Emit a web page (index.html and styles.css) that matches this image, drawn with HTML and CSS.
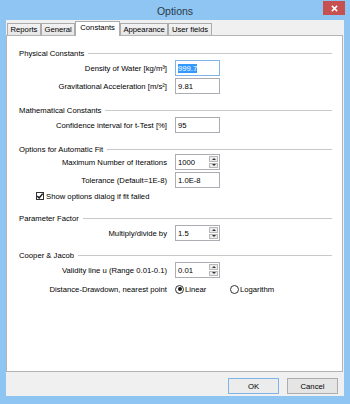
FILE: index.html
```html
<!DOCTYPE html>
<html>
<head>
<meta charset="utf-8">
<title>Options</title>
<link rel="stylesheet" href="styles.css">
</head>
<body>
<div class="window">
  <div class="titlebar">
    <span class="title">Options</span>
    <div class="close">
      <svg width="7" height="7" viewBox="0 0 8 8"><path d="M1 1L7 7M7 1L1 7" stroke="#fff" stroke-width="1.7"/></svg>
    </div>
  </div>
  <div class="client">
    <div class="tabs">
      <div class="tab">Reports</div>
      <div class="tab">General</div>
      <div class="tab active">Constants</div>
      <div class="tab">Appearance</div>
      <div class="tab">User fields</div>
    </div>
    <div class="panel">
      <section class="group">
        <div class="group-head"><span>Physical Constants</span></div>
        <div class="row"><span class="label">Density of Water [kg/m³]</span><div class="field focus"><span class="sel">999.7</span></div></div>
        <div class="row"><span class="label">Gravitational Acceleration [m/s²]</span><div class="field">9.81</div></div>
      </section>
      <section class="group">
        <div class="group-head"><span>Mathematical Constants</span></div>
        <div class="row"><span class="label">Confidence interval for t-Test [%]</span><div class="field">95</div></div>
      </section>
      <section class="group">
        <div class="group-head tight"><span>Options for Automatic Fit</span></div>
        <div class="row"><span class="label">Maximum Number of Iterations</span><div class="field">1000<span class="spin"><span class="up"></span><span class="down"></span></span></div></div>
        <div class="row"><span class="label">Tolerance (Default=1E-8)</span><div class="field">1.0E-8</div></div>
        <div class="check-row">
          <span class="checkbox"><svg width="8" height="8" viewBox="0 0 8 8"><path d="M1.3 4.1L3.2 6L6.7 1.6" fill="none" stroke="#1a1a1a" stroke-width="1.5"/></svg></span>
          <span>Show options dialog if fit failed</span>
        </div>
      </section>
      <section class="group factor">
        <div class="group-head"><span>Parameter Factor</span></div>
        <div class="row"><span class="label">Multiply/divide by</span><div class="field">1.5<span class="spin"><span class="up"></span><span class="down"></span></span></div></div>
      </section>
      <section class="group last">
        <div class="group-head"><span>Cooper &amp; Jacob</span></div>
        <div class="row"><span class="label">Validity line u (Range 0.01-0.1)</span><div class="field">0.01<span class="spin"><span class="up"></span><span class="down"></span></span></div></div>
        <div class="row radio-line"><span class="label">Distance-Drawdown, nearest point</span>
          <div class="radios">
            <span class="radio-item linear"><span class="radio on"></span>Linear</span>
            <span class="radio-item"><span class="radio"></span>Logarithm</span>
          </div>
        </div>
      </section>
    </div>
    <div class="footer">
      <div class="btn default">OK</div>
      <div class="btn">Cancel</div>
    </div>
  </div>
</div>
</body>
</html>
```
FILE: styles.css
```css
* { box-sizing: border-box; }
html, body { margin: 0; padding: 0; }
body {
  width: 350px;
  height: 404px;
  overflow: hidden;
  font-family: "Liberation Sans", Arial, sans-serif;
  font-size: 7.7px;
  color: #000;
}
.window {
  width: 350px;
  height: 404px;
  background: #8ec5f2;
  display: flex;
  flex-direction: column;
  padding: 0 6px 8px;
}
.titlebar {
  height: 20px;
  margin: 0 -6px;
  display: grid;
  grid-template-columns: 1fr auto 1fr;
  align-items: center;
}
.title {
  grid-column: 2;
  font-size: 10.5px;
  color: #2c3a48;
  padding-top: 2px;
}
.close {
  grid-column: 3;
  justify-self: end;
  align-self: start;
  margin: 1px 5px 0 0;
  width: 22px;
  height: 14px;
  background: #c75050;
  display: flex;
  align-items: center;
  justify-content: center;
}
.client {
  flex: 1;
  background: #f0f0f0;
  display: flex;
  flex-direction: column;
}
.tabs {
  height: 15px;
  display: flex;
  align-items: flex-end;
  padding-left: 1px;
}
.tab {
  height: 12px;
  padding: 0 2.5px;
  border: 1px solid #acacac;
  border-bottom: none;
  background: linear-gradient(#f2f2f2, #e6e6e6);
  line-height: 11px;
  white-space: nowrap;
}
.tab.active {
  height: 15px;
  margin-bottom: -1px;
  padding: 0 4px;
  background: #fff;
  position: relative;
  z-index: 1;
  line-height: 12px;
}
.panel {
  flex: 1;
  background: #fff;
  border: 1px solid #b4b4b4;
  margin-right: 1px;
  padding: 13px 10px 0 12px;
  display: flex;
  flex-direction: column;
  gap: 12px;
}
.group {
  display: flex;
  flex-direction: column;
  gap: 2px;
}
.group.factor { margin-top: 1px; }
.group.last { margin-top: -2px; }
.group-head {
  height: 10px;
  line-height: 10px;
  display: flex;
  align-items: center;
  gap: 4px;
  margin-bottom: -1px;
}
.group-head.tight { margin-bottom: -3px; }
.group-head::after {
  content: "";
  flex: 1;
  height: 1px;
  background: #c9c9c9;
  margin-top: -1px;
}
.row {
  display: grid;
  grid-template-columns: 148px 45px;
  column-gap: 8px;
  align-items: center;
  height: 16px;
}
.label {
  text-align: right;
  white-space: nowrap;
}
.field {
  width: 45px;
  height: 16px;
  border: 1px solid #abadb3;
  background: #fff;
  display: flex;
  align-items: center;
  padding-left: 2px;
  padding-right: 1px;
}
.field.focus { border-color: #7eb4ea; }
.sel { background: #3399ff; color: #fff; }
.spin {
  margin-left: auto;
  width: 9px;
  height: 12px;
  display: flex;
  flex-direction: column;
  gap: 1px;
}
.spin .up, .spin .down {
  flex: 1;
  background: #ececec;
  border: 1px solid #b8b8b8;
  display: flex;
  align-items: center;
  justify-content: center;
}
.spin .up::before, .spin .down::before {
  content: "";
  border-left: 2px solid transparent;
  border-right: 2px solid transparent;
}
.spin .up::before { border-bottom: 2px solid #333; }
.spin .down::before { border-top: 2px solid #333; }
.check-row {
  display: flex;
  align-items: center;
  gap: 2px;
  padding-left: 17px;
  height: 10px;
  margin-top: 1px;
}
.checkbox {
  width: 8px;
  height: 8px;
  border: 1px solid #333;
  background: #fff;
  display: flex;
  align-items: center;
  justify-content: center;
}
.checkbox svg { flex: none; }
.radio-line {
  grid-template-columns: 148px auto;
  margin-top: 3px;
  height: 12px;
}
.radios { display: flex; align-items: center; }
.radio-item {
  display: flex;
  align-items: center;
  gap: 1px;
  white-space: nowrap;
}
.radio-item.linear { width: 55px; }
.radio {
  width: 9px;
  height: 9px;
  border: 1px solid #333;
  border-radius: 50%;
  background: #fff;
  display: flex;
  align-items: center;
  justify-content: center;
}
.radio.on::before {
  content: "";
  width: 4px;
  height: 4px;
  border-radius: 50%;
  background: #1a1a1a;
}
.footer {
  height: 24px;
  display: flex;
  justify-content: flex-end;
  gap: 8px;
  padding: 6px 6px 2px;
}
.btn {
  width: 51px;
  height: 16px;
  border: 1px solid #adadad;
  background: #e5e5e5;
  display: flex;
  align-items: center;
  justify-content: center;
}
.btn.default {
  border-color: #7eb4ea;
  background: #ececec;
}
```
